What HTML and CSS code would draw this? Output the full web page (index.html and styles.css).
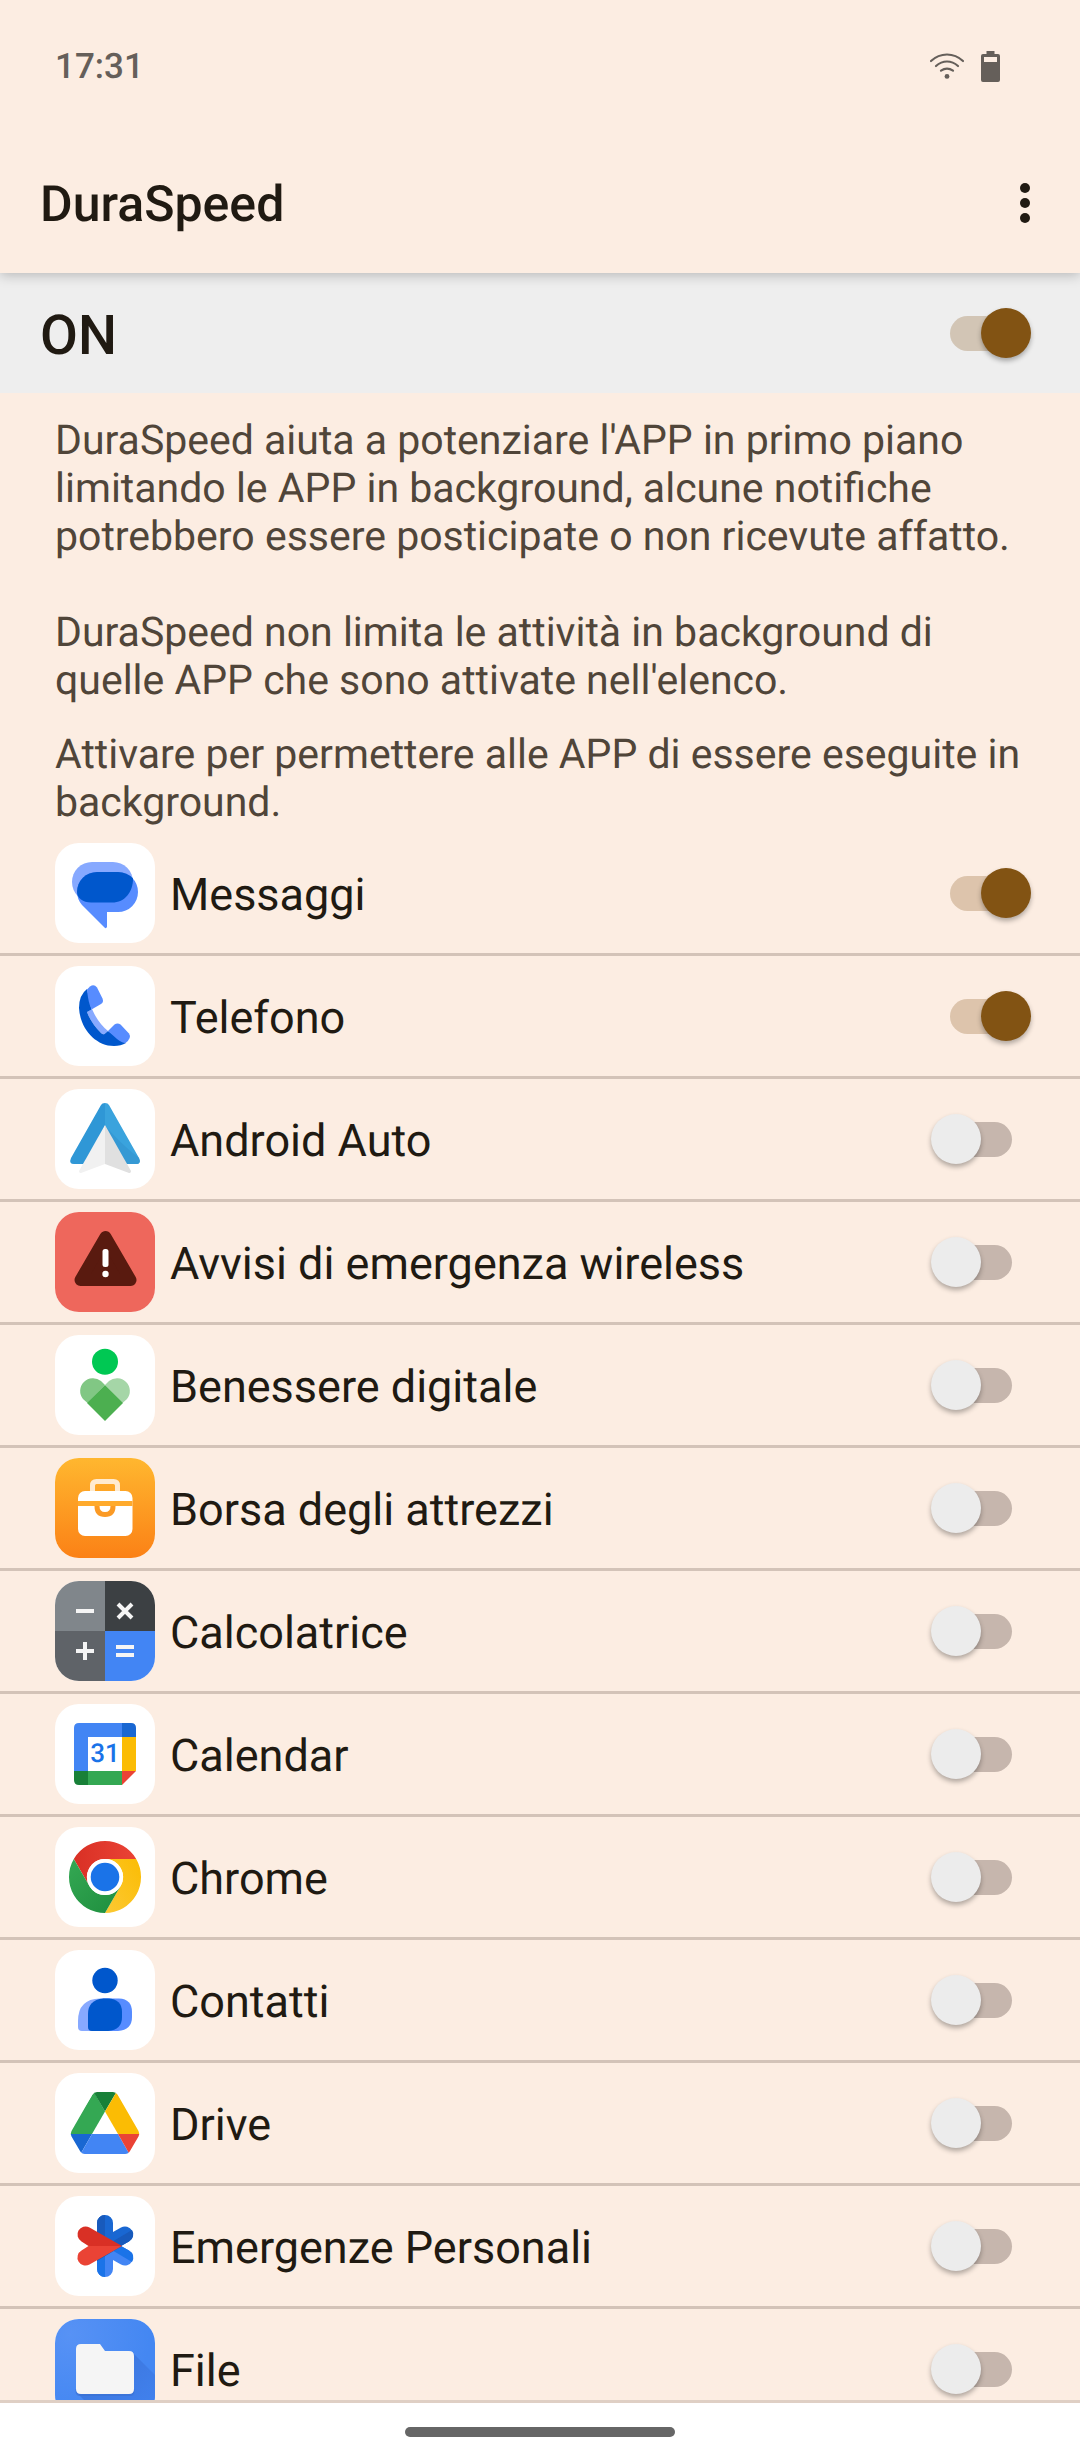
FILE: index.html
```html
<!DOCTYPE html>
<html lang="it">
<head>
<meta charset="utf-8">
<meta name="viewport" content="width=device-width, initial-scale=1">
<title>DuraSpeed</title>
<link rel="stylesheet" href="styles.css">
</head>
<body>
<div class="status">
  <time class="clock">17:31</time>
  <div class="status-icons">
    <svg width="36" height="32" viewBox="0 0 36 32" fill="none" stroke="currentColor" stroke-width="2.2" stroke-linecap="round" aria-hidden="true">
      <path d="M2 11Q9 4.500 18 4.500T34 11"/><path d="M7 16Q12 11.500 18 11.500T29 16"/><path d="M12 20.700Q15 18.700 18 18.700T24 20.700"/>
      <circle cx="18" cy="26.400" r="2.400" fill="currentColor" stroke="none"/>
    </svg>
    <svg width="19" height="32" viewBox="0 0 19 32" aria-hidden="true">
      <path fill="currentColor" fill-rule="evenodd" d="M5.500 1H13.500V4H17Q19 4 19 6V30Q19 32 17 32H2Q0 32 0 30V6Q0 4 2 4H5.500ZM3 7V12H16V7Z"/>
    </svg>
  </div>
</div>

<header class="app-bar">
  <h1 class="title">DuraSpeed</h1>
  <button class="menu" type="button" aria-label="Altre opzioni">
    <svg width="10" height="40" viewBox="0 0 10 40" fill="currentColor"><circle cx="5" cy="5" r="5"/><circle cx="5" cy="20" r="5"/><circle cx="5" cy="35" r="5"/></svg>
  </button>
</header>

<label class="master">
  <span class="master-name">ON</span>
  <input class="switch" type="checkbox" role="switch" checked>
</label>

<main class="content">
  <section class="intro">
    <p>DuraSpeed aiuta a potenziare l'APP in primo piano limitando le APP in background, alcune notifiche potrebbero essere posticipate o non ricevute affatto.</p>
    <p class="second">DuraSpeed non limita le attività in background di quelle APP che sono attivate nell'elenco.</p>
    <p class="third">Attivare per permettere alle APP di essere eseguite in background.</p>
  </section>

  <ul class="apps">
    <li><label class="app">
      <svg class="icon" viewBox="0 0 100 100" aria-hidden="true">
        <rect x="17" y="19" width="61" height="40" rx="20" fill="#87a9ff"/>
        <path fill="#578cff" d="M42 29H63A20 20 0 0 1 63 69H52V84Q51 86 49.500 84.500L27 62Q22 56 22 49A20 20 0 0 1 42 29Z"/>
        <path fill="#0057cc" d="M42 29H63Q72 29 78 35.500C78 49 70 59.500 57 59.500H36C28 59.500 22 55 22 49A20 20 0 0 1 42 29Z"/>
      </svg>
      <span class="name">Messaggi</span><input class="switch" type="checkbox" role="switch" checked>
    </label></li>
    <li><label class="app">
      <svg class="icon" viewBox="0 0 100 100" aria-hidden="true">
        <path fill="#87a9ff" d="M32 46L37 43Q43 57 53 65L49.500 68Q48 69 46 67Q36 57 32 46Z"/>
        <path fill="#0057cc" d="M32 23Q24 29 24 42C25 62 40 80 59 80Q66 80 71 77L53 65L49.500 68Q48 69 46 67Q36 57 32 46L36.500 43.500Z"/>
        <path fill="#578cff" d="M32 23.500L35 20.500Q39 17.500 42 21.500L47.500 32.500Q49 36 46 38L36.500 43.500Q33 36 32 23.500Z"/>
        <path fill="#578cff" d="M53 65L59.500 58.500Q62.500 56.500 65.500 58.500L74 67.500Q77 72 70.500 77Q67 77 62 73Z"/>
      </svg>
      <span class="name">Telefono</span><input class="switch" type="checkbox" role="switch" checked>
    </label></li>
    <li><label class="app">
      <svg class="icon" viewBox="0 0 100 100" aria-hidden="true">
        <path fill="#2f97d6" d="M50 14Q47 14 46 16L16 69Q13.500 75 19 75H30L50 37Z"/>
        <path fill="#3aa3dd" d="M50 14Q53 14 54 16L84 69Q86.500 75 81 75H70L50 37Z"/>
        <path fill="#3599d4" d="M50 36.500Q67 56 84 69Q86.500 75 81 75H70Z"/>
        <path fill="#f1f1f1" d="M50 36L24 82Q24 84.500 26 84L50 75Z"/>
        <path fill="#e0e0e0" d="M50 36L76 82Q76 84.500 74 84L50 75Z"/>
      </svg>
      <span class="name">Android Auto</span><input class="switch" type="checkbox" role="switch">
    </label></li>
    <li><label class="app">
      <svg class="icon" viewBox="0 0 100 100" aria-hidden="true">
        <rect width="100" height="100" fill="#ee675c"/>
        <path fill="#591a0f" stroke="#591a0f" stroke-width="12" stroke-linejoin="round" d="M50.500 25L75.500 68H25.500Z"/>
        <rect x="47.500" y="37" width="6" height="18" rx="2.500" fill="#fff"/><circle cx="50.500" cy="62" r="3.200" fill="#fff"/>
      </svg>
      <span class="name">Avvisi di emergenza wireless</span><input class="switch" type="checkbox" role="switch">
    </label></li>
    <li><label class="app">
      <svg class="icon" viewBox="0 0 100 100" aria-hidden="true">
        <circle cx="50" cy="26.700" r="13" fill="#00c853"/>
        <path fill="#81c784" d="M50 50L32.500 68L28 64A12.800 12.800 0 0 1 46 46Z"/>
        <path fill="#a5d6a7" d="M50 50L67.500 68L72 64A12.800 12.800 0 0 0 54 46Z"/>
        <path fill="#4caf50" d="M50 50L68 68L50 86L32 68Z"/>
      </svg>
      <span class="name">Benessere digitale</span><input class="switch" type="checkbox" role="switch">
    </label></li>
    <li><label class="app">
      <svg class="icon" viewBox="0 0 100 100" aria-hidden="true">
        <defs><linearGradient id="toolbag" x2="0" y2="1"><stop stop-color="#ffb72f"/><stop offset="1" stop-color="#fb8116"/></linearGradient></defs>
        <rect width="100" height="100" fill="url(#toolbag)"/>
        <path fill="none" stroke="#ffebd0" stroke-width="5" d="M37.500 34V27.500Q37.500 23.500 41.500 23.500H58.500Q62.500 23.500 62.500 27.500V34"/>
        <rect x="23" y="33" width="54.500" height="45" rx="7" fill="#fff"/>
        <path fill="#ffaa2c" d="M23 43H77.500V48H23Z"/>
        <path fill="#fb9a25" d="M39.500 48H60.500Q60.500 59 50 59T39.500 48Z"/>
        <path fill="#fff" d="M44.500 48H55.500Q55.500 54 50 54T44.500 48Z"/>
      </svg>
      <span class="name">Borsa degli attrezzi</span><input class="switch" type="checkbox" role="switch">
    </label></li>
    <li><label class="app">
      <svg class="icon" viewBox="0 0 100 100" aria-hidden="true">
        <path fill="#80868b" d="M0 0H50V50H0Z"/><path fill="#3c4043" d="M50 0H100V50H50Z"/>
        <path fill="#5f6368" d="M0 50H50V100H0Z"/><path fill="#4285f4" d="M50 50H100V100H50Z"/>
        <path stroke="#f5f5f5" stroke-width="4" d="M21 30H39M21 70H39M30 61V79M61 66H79M61 74H79M63 23L77 37M77 23L63 37"/>
      </svg>
      <span class="name">Calcolatrice</span><input class="switch" type="checkbox" role="switch">
    </label></li>
    <li><label class="app">
      <svg class="icon" viewBox="0 0 100 100" aria-hidden="true">
        <path fill="#4285f4" d="M24 19H67V33H33V67H19V24Q19 19 24 19Z"/>
        <path fill="#1967d2" d="M67 19H76Q81 19 81 24V33H67Z"/>
        <path fill="#fbbc04" d="M67 33H81V67H67Z"/>
        <path fill="#34a853" d="M33 67H67V81H33Z"/>
        <path fill="#188038" d="M19 67H33V81H24Q19 81 19 76Z"/>
        <path fill="#ea4335" d="M67 67H81L67 81Z"/>
        <text class="day" x="50" y="58" text-anchor="middle">31</text>
      </svg>
      <span class="name">Calendar</span><input class="switch" type="checkbox" role="switch">
    </label></li>
    <li><label class="app">
      <svg class="icon" viewBox="0 0 100 100" aria-hidden="true">
        <defs>
          <linearGradient id="cr"><stop stop-color="#d93025"/><stop offset="1" stop-color="#ea4335"/></linearGradient>
          <linearGradient id="cg" x2="1" y2="1"><stop stop-color="#34a853"/><stop offset="1" stop-color="#1e8e3e"/></linearGradient>
          <linearGradient id="cy" x1="1" x2="0" y2="1"><stop stop-color="#fbbc04"/><stop offset="1" stop-color="#fcc934"/></linearGradient>
        </defs>
        <path fill="url(#cr)" d="M18.800 32A36 36 0 0 1 81.200 32H50A18 18 0 0 0 34.400 59Z"/>
        <path fill="url(#cy)" d="M81.200 32A36 36 0 0 1 50 86L65.600 59A18 18 0 0 0 50 32Z"/>
        <path fill="url(#cg)" d="M50 86A36 36 0 0 1 18.800 32L34.400 59A18 18 0 0 0 65.600 59Z"/>
        <circle cx="50" cy="50" r="18" fill="#fff"/><circle cx="50" cy="50" r="14.300" fill="#1a73e8"/>
      </svg>
      <span class="name">Chrome</span><input class="switch" type="checkbox" role="switch">
    </label></li>
    <li><label class="app">
      <svg class="icon" viewBox="0 0 100 100" aria-hidden="true">
        <circle cx="50" cy="30.500" r="12.700" fill="#0057cc"/>
        <path fill="#87a9ff" d="M45 48.500H55V81H27Q23 81 23 77V71Q23 49 45 48.500Z"/>
        <path fill="#578cff" d="M48 48.500H64Q77 49 77 62V67Q77 80 63 81H40Z"/>
        <path fill="#0057cc" d="M48 48.500H53Q67 49 67 62V67Q67 80 53 81H37Q33 81 33 77V64Q33 50 48 48.500Z"/>
      </svg>
      <span class="name">Contatti</span><input class="switch" type="checkbox" role="switch">
    </label></li>
    <li><label class="app">
      <svg class="icon" viewBox="0 0 100 100" aria-hidden="true">
        <clipPath id="drive"><path d="M42 19H58Q61 19 62.500 21.500L83.500 58Q85 61 83.500 63.500L75 78Q73.500 81 70 81H30Q26.500 81 25 78L16.500 63.500Q15 61 16.500 58L37.500 21.500Q39 19 42 19Z"/></clipPath>
        <g clip-path="url(#drive)">
          <path fill="#34a853" d="M39 19L50 38.500L37 61H13Z"/><path fill="#188038" d="M38 18H62L50 38.500Z"/>
          <path fill="#fbbc04" d="M61.500 19L87 61H63L50 38.500Z"/><path fill="#1967d2" d="M13 61H37L25.500 81H18Z"/>
          <path fill="#4285f4" d="M37 61H63L75 82H25Z"/><path fill="#ea4335" d="M63 61H87L75 82Z"/>
        </g>
      </svg>
      <span class="name">Drive</span><input class="switch" type="checkbox" role="switch">
    </label></li>
    <li><label class="app">
      <svg class="icon" viewBox="0 0 100 100" aria-hidden="true">
        <path fill="#1967d2" d="M42 50V27A8 8 0 0 1 58 27V36L66 31.500A8 8 0 0 1 74 45.500L66 50Z"/>
        <path fill="#185abc" d="M50 19A8 8 0 0 0 42 27V50H50ZM77 34A8 8 0 0 1 74 45.500L66 50H50Z"/>
        <path fill="#4285f4" d="M42 50V73A8 8 0 0 0 58 73V64L66 68.500A8 8 0 0 0 74 54.500L66 50Z"/>
        <path fill="#1a73e8" d="M50 81A8 8 0 0 1 42 73V50H50ZM77 66A8 8 0 0 0 74 54.500L66 50H50Z"/>
        <path fill="#1a5ab0" d="M67 50L42 65V62L62 50Z"/>
        <path fill="#d93025" d="M67 50H33.500L26.500 45.500A8 8 0 0 1 34.500 31.500Z"/>
        <path fill="#ea4335" d="M67 50H33.500L26.500 54.500A8 8 0 0 0 34.500 68.500Z"/>
      </svg>
      <span class="name">Emergenze Personali</span><input class="switch" type="checkbox" role="switch">
    </label></li>
    <li><label class="app">
      <svg class="icon" viewBox="0 0 100 100" aria-hidden="true">
        <defs>
          <radialGradient id="files" cx=".15" cy=".15" r=".8"><stop stop-color="#5792f5"/><stop offset="1" stop-color="#4487f2"/></radialGradient>
          <linearGradient id="cast" x2="1" y2="1"><stop stop-color="#3b73d8"/><stop offset="1" stop-color="#4285f4"/></linearGradient>
        </defs>
        <rect width="100" height="100" fill="url(#files)"/>
        <path fill="url(#cast)" d="M78 34L112 68V109H57L23 75Z"/>
        <path fill="#3a70d0" opacity=".6" d="M20.500 70H79.500V72Q79.500 77 75 77H25Q20.500 77 20.500 72Z"/>
        <path fill="#f5f5f5" d="M26 25H45L50 32H74Q79 32 79 37V70Q79 75 74 75H26Q21 75 21 70V30Q21 25 26 25Z"/>
      </svg>
      <span class="name">File</span><input class="switch" type="checkbox" role="switch">
    </label></li>
  </ul>
</main>

<nav class="gesture-bar" aria-label="Navigazione"><span class="handle"></span></nav>
</body>
</html>
```
FILE: styles.css
```css
* {
  box-sizing: border-box;
}

body {
  margin: 0;
  height: 100vh;
  display: flex;
  flex-direction: column;
  background: #fcede2;
  color: #201a12;
  font-family: Roboto, "Noto Sans", sans-serif;
  text-rendering: geometricPrecision;
}

.status {
  flex: none;
  height: 132px;
  padding: 0 80px 0 55px;
  display: flex;
  align-items: center;
  justify-content: space-between;
  color: #655f5a;
}

.clock {
  font-size: 35px;
  font-weight: 500;
}

.status-icons {
  display: flex;
  gap: 16px;
}

/* the clip keeps the shadow below the bar only */
.app-bar {
  flex: none;
  position: relative;
  height: 141px;
  padding: 0 40px;
  display: flex;
  align-items: center;
  justify-content: space-between;
  background: #fcede2;
  box-shadow: 0 2px 12px rgba(0, 0, 0, 0.24);
  clip-path: inset(0 0 -20px);
}

.title {
  margin: 0;
  padding-top: 4px;
  font-size: 50px;
  font-weight: 500;
}

.menu {
  padding: 10px;
  border: 0;
  background: none;
  color: inherit;
  display: flex;
}

.master {
  flex: none;
  height: 120px;
  padding: 0 49px 0 40px;
  display: flex;
  align-items: center;
  justify-content: space-between;
  background: #eee;
}

.master-name {
  padding-top: 6px;
  font-size: 55px;
  font-weight: 500;
}

.content {
  flex: 1;
  min-height: 0;
  overflow-y: auto;
  scrollbar-width: none;
  border-bottom: 3px solid #dfcfc4;
}

.intro {
  padding: 24px 55px 6px;
  color: #504539;
  font-size: 41px;
  line-height: 48px;
}

.intro p {
  margin: 0;
}

.intro .second {
  margin-top: 48px;
}

.intro .third {
  margin-top: 26px;
}

.apps {
  margin: 0;
  padding: 0;
  list-style: none;
}

.app {
  padding: 10px 49px 10px 55px;
  border-bottom: 3px solid #d3c3b8;
  display: flex;
  align-items: center;
  gap: 15px;
}

.icon {
  flex: none;
  width: 100px;
  height: 100px;
  border-radius: 24px;
  background: #fff;
}

.day {
  font-size: 26px;
  font-weight: 500;
  fill: #1a73e8;
}

.name {
  flex: 1;
  padding-top: 2px;
  font-size: 45px;
}

.switch {
  appearance: none;
  flex: none;
  width: 100px;
  height: 50px;
  margin: 0;
  display: grid;
  align-items: center;
}

.switch::before,
.switch::after {
  content: "";
  grid-area: 1 / 1;
}

.switch::before {
  justify-self: center;
  width: 62px;
  height: 35px;
  border-radius: 18px;
  background: #c6b6ad;
}

.switch::after {
  width: 50px;
  height: 50px;
  border-radius: 50%;
  background: #ececec;
  box-shadow: 0 3px 5px rgba(0, 0, 0, 0.3);
}

.switch:checked::before {
  background: rgba(133, 83, 19, 0.26);
}

.switch:checked::after {
  justify-self: end;
  background: #825313;
}

.gesture-bar {
  flex: none;
  height: 57px;
  display: flex;
  align-items: center;
  justify-content: center;
  background: #fff;
}

.handle {
  width: 25%;
  height: 10px;
  border-radius: 5px;
  background: #666;
}
```
